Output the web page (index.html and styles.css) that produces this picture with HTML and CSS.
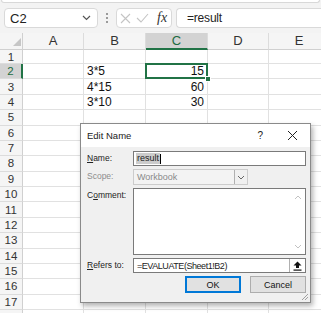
FILE: index.html
```html
<!DOCTYPE html>
<html lang="en">
<head>
    <meta charset="UTF-8">
    <title>Edit Name</title>
    <link rel="stylesheet" href="styles.css">
</head>
<body>
<div class="ribbon-edge"></div>
<div class="fbar">
    <div class="namebox">
        <span>C2</span>
        <svg width="9" height="6" viewBox="0 0 9 6"><polyline points="1,1 4.5,4.5 8,1" fill="none" stroke="#555" stroke-width="1.2"/></svg>
    </div>
    <div class="grip"><i></i><i></i><i></i></div>
    <div class="fbtns">
        <svg width="11" height="11" viewBox="0 0 11 11"><path d="M1 1L10 10M10 1L1 10" stroke="#c4c4c4" stroke-width="1.1"/></svg>
        <svg width="13" height="10" viewBox="0 0 13 10"><polyline points="1,5 5,9 12,1" fill="none" stroke="#c4c4c4" stroke-width="1.1"/></svg>
        <span class="fx">fx</span>
    </div>
    <div class="formula">=result</div>
</div>

<div class="sheet">
    <div class="corner"><svg width="8" height="8" viewBox="0 0 8 8"><polygon points="8,0 8,8 0,8" fill="#c6c6c6"/></svg></div>
    <div class="ch">A</div><div class="ch">B</div><div class="ch on">C</div><div class="ch">D</div><div class="ch">E</div>

    <div class="rh">1</div><div class="c"></div><div class="c"></div><div class="c"></div><div class="c"></div><div class="c"></div>
    <div class="rh on">2</div><div class="c"></div><div class="c">3*5</div><div class="c num active">15<i class="handle"></i></div><div class="c"></div><div class="c"></div>
    <div class="rh">3</div><div class="c"></div><div class="c">4*15</div><div class="c num">60</div><div class="c"></div><div class="c"></div>
    <div class="rh">4</div><div class="c"></div><div class="c">3*10</div><div class="c num">30</div><div class="c"></div><div class="c"></div>
    <div class="rh">5</div><div class="c"></div><div class="c"></div><div class="c"></div><div class="c"></div><div class="c"></div>
    <div class="rh">6</div><div class="c"></div><div class="c"></div><div class="c"></div><div class="c"></div><div class="c"></div>
    <div class="rh">7</div><div class="c"></div><div class="c"></div><div class="c"></div><div class="c"></div><div class="c"></div>
    <div class="rh">8</div><div class="c"></div><div class="c"></div><div class="c"></div><div class="c"></div><div class="c"></div>
    <div class="rh">9</div><div class="c"></div><div class="c"></div><div class="c"></div><div class="c"></div><div class="c"></div>
    <div class="rh">10</div><div class="c"></div><div class="c"></div><div class="c"></div><div class="c"></div><div class="c"></div>
    <div class="rh">11</div><div class="c"></div><div class="c"></div><div class="c"></div><div class="c"></div><div class="c"></div>
    <div class="rh">12</div><div class="c"></div><div class="c"></div><div class="c"></div><div class="c"></div><div class="c"></div>
    <div class="rh">13</div><div class="c"></div><div class="c"></div><div class="c"></div><div class="c"></div><div class="c"></div>
    <div class="rh">14</div><div class="c"></div><div class="c"></div><div class="c"></div><div class="c"></div><div class="c"></div>
    <div class="rh">15</div><div class="c"></div><div class="c"></div><div class="c"></div><div class="c"></div><div class="c"></div>
    <div class="rh">16</div><div class="c"></div><div class="c"></div><div class="c"></div><div class="c"></div><div class="c"></div>
    <div class="rh">17</div><div class="c"></div><div class="c"></div><div class="c"></div><div class="c"></div><div class="c"></div>
    <div class="rh"></div><div class="c"></div><div class="c"></div><div class="c"></div><div class="c"></div><div class="c"></div>
</div>

<div class="dlg">
    <div class="dlg-title">
        <span class="dlg-name">Edit Name</span>
        <span class="help">?</span>
        <svg class="close" width="11" height="11" viewBox="0 0 11 11"><path d="M1 1L10 10M10 1L1 10" stroke="#222" stroke-width="1"/></svg>
    </div>
    <div class="dlg-body">
        <label><u>N</u>ame:</label>
        <div class="field"><span class="sel">result</span><i class="caret"></i></div>

        <label class="dis">Scope:</label>
        <div class="select">
            <span>Workbook</span>
            <span class="dd"><svg width="8" height="5" viewBox="0 0 8 5"><polyline points="1,1 4,4 7,1" fill="none" stroke="#666" stroke-width="1"/></svg></span>
        </div>

        <label>C<u>o</u>mment:</label>
        <div class="area">
            <svg class="up" width="8" height="5" viewBox="0 0 8 5"><polyline points="1,4 4,1 7,4" fill="none" stroke="#c2c2c2" stroke-width="1"/></svg>
            <svg class="down" width="8" height="5" viewBox="0 0 8 5"><polyline points="1,1 4,4 7,1" fill="none" stroke="#c2c2c2" stroke-width="1"/></svg>
        </div>

        <label><u>R</u>efers to:</label>
        <div class="field ref">
            <span class="reftext">=EVALUATE(Sheet1!B2)</span>
            <span class="pick"><svg width="9" height="10" viewBox="0 0 9 10"><polygon points="4.5,0.5 8.5,4.5 6,4.5 6,7 3,7 3,4.5 0.5,4.5" fill="#111"/><rect x="0.5" y="8.5" width="8" height="1.2" fill="#111"/></svg></span>
        </div>

        <div class="btns">
            <button class="btn ok">OK</button>
            <button class="btn">Cancel</button>
        </div>
    </div>
    <svg class="resize" width="8" height="8" viewBox="0 0 8 8"><path d="M7 1L1 7M7 4L4 7" stroke="#a0a0a0" stroke-width="1"/></svg>
</div>
</body>
</html>
```

FILE: styles.css
```css
*{
    margin: 0;
    padding: 0;
    box-sizing: border-box;
}
body{
    width: 321px;
    height: 313px;
    overflow: hidden;
    position: relative;
    background: #f3f3f3;
    font-family: "Liberation Sans", Arial, sans-serif;
    color: #222;
}

/* formula bar */
.ribbon-edge{
    height: 3px;
    background: #fff;
    border: 1px solid #d8d8d8;
    border-top: none;
    border-radius: 0 0 4px 4px;
    margin: 0 1px;
}
.fbar{
    display: flex;
    align-items: center;
    height: 20px;
    margin-top: 5px;
    padding-left: 4px;
}
.namebox{
    width: 94px;
    height: 20px;
    background: #fff;
    border: 1px solid #d9d9d9;
    border-radius: 4px;
    display: flex;
    align-items: center;
    justify-content: space-between;
    padding: 0 6px 0 5px;
    font-size: 13px;
}
.grip{
    width: 18px;
    display: flex;
    flex-direction: column;
    align-items: center;
    gap: 2px;
}
.grip i{
    width: 2px;
    height: 2px;
    background: #9a9a9a;
}
.fbtns{
    width: 56px;
    height: 20px;
    background: #fff;
    border: 1px solid #d9d9d9;
    border-radius: 4px;
    display: flex;
    align-items: center;
    gap: 5px;
    padding-left: 3px;
}
.fx{
    font-family: "Liberation Serif", serif;
    font-style: italic;
    font-size: 14px;
    color: #333;
    margin-left: 3px;
}
.formula{
    flex: 1;
    height: 20px;
    margin-left: 4px;
    background: #fff;
    border: 1px solid #d9d9d9;
    border-right: none;
    border-radius: 4px 0 0 4px;
    padding-left: 10px;
    font-size: 12px;
    line-height: 18px;
    letter-spacing: -0.2px;
}

/* grid */
.sheet{
    margin-top: 5px;
    display: grid;
    grid-template-columns: 23px 61px 62px 62px 61px 61px;
    grid-template-rows: 17px 14px repeat(16, 15.375px) 15px;
    background: #fff;
}
.corner{
    background: #f5f5f5;
    border-right: 1px solid #d0d0d0;
    border-bottom: 1px solid #d0d0d0;
    display: flex;
    align-items: flex-end;
    justify-content: flex-end;
    padding: 0 1px 3px 0;
}
.ch{
    background: #f5f5f5;
    border-right: 1px solid #dcdcdc;
    border-bottom: 1px solid #d0d0d0;
    text-align: center;
    font-size: 13px;
    line-height: 16px;
    color: #333;
}
.ch.on{
    background: #d3d3d3;
    color: #1d6b41;
    border-bottom: 2px solid #217346;
}
.rh{
    background: #f5f5f5;
    border-right: 1px solid #d0d0d0;
    border-bottom: 1px solid #dcdcdc;
    display: flex;
    align-items: center;
    justify-content: center;
    font-size: 11.5px;
    color: #333;
}
.rh.on{
    background: #d3d3d3;
    color: #1d6b41;
    border-right: 2px solid #217346;
}
.c{
    border-right: 1px solid #e1e1e1;
    border-bottom: 1px solid #e1e1e1;
    display: flex;
    align-items: center;
    font-size: 12px;
    padding: 0 3px;
    color: #111;
}
.c.num{
    justify-content: flex-end;
}
.c.active{
    position: relative;
}
.c.active::after{
    content: "";
    position: absolute;
    left: -1px;
    top: -1px;
    right: -1px;
    bottom: -1px;
    border: 2px solid #217346;
}
.handle{
    position: absolute;
    right: -4px;
    bottom: -4px;
    width: 6px;
    height: 6px;
    background: #217346;
    border: 1px solid #fff;
    z-index: 1;
}

/* dialog */
.dlg{
    position: absolute;
    left: 80px;
    top: 123px;
    width: 231px;
    height: 180px;
    background: #f0f0f0;
    border: 1px solid #8a8a8a;
    box-shadow: 2px 3px 5px rgba(0, 0, 0, 0.3);
}
.dlg-title{
    height: 23px;
    background: #fff;
    display: flex;
    align-items: center;
    padding-left: 6px;
    font-size: 9.5px;
}
.dlg-name{
    flex: 1;
}
.help{
    font-size: 10px;
    margin-right: 24px;
}
.close{
    margin-right: 12px;
}
.dlg-body{
    display: grid;
    grid-template-columns: 46px 1fr;
    grid-template-rows: 15px 16px 67px 15px 17px;
    row-gap: 3px;
    padding: 4px 4px 0 6px;
    font-size: 8.5px;
}
.dlg-body label{
    line-height: 14px;
}
.dlg-body label.dis{
    color: #8d8d8d;
}
.field{
    background: #fff;
    border: 1px solid #7a7a7a;
    display: flex;
    align-items: center;
    padding-left: 2px;
    font-size: 9px;
}
.sel{
    background: #cccccc;
    padding: 0 1px;
    line-height: 11px;
}
.caret{
    width: 1px;
    height: 10px;
    background: #000;
}
.select{
    width: 115px;
    background: #f3f3f3;
    border: 1px solid #cccccc;
    display: flex;
    align-items: center;
    justify-content: space-between;
    padding-left: 3px;
    font-size: 9px;
    color: #8a8a8a;
}
.dd{
    width: 13px;
    height: 14px;
    border-left: 1px solid #b0b0b0;
    display: flex;
    align-items: center;
    justify-content: center;
    background: #f0f0f0;
}
.area{
    background: #fff;
    border: 1px solid #7a7a7a;
    display: flex;
    flex-direction: column;
    align-items: flex-end;
    justify-content: space-between;
    padding: 6px 3px 5px 0;
}
.ref{
    justify-content: space-between;
    padding-left: 3px;
}
.reftext{
    letter-spacing: -0.45px;
}
.pick{
    width: 16px;
    height: 13px;
    border-left: 1px solid #b0b0b0;
    display: flex;
    align-items: center;
    justify-content: center;
}
.btns{
    grid-column: 1 / 3;
    display: flex;
    justify-content: flex-end;
    gap: 9px;
}
.btn{
    width: 56px;
    height: 17px;
    background: #e1e1e1;
    border: 1px solid #adadad;
    font-family: "Liberation Sans", Arial, sans-serif;
    font-size: 9px;
    color: #111;
}
.btn.ok{
    border: 2px solid #0078d7;
}
.resize{
    position: absolute;
    right: 1px;
    bottom: 1px;
}
```
